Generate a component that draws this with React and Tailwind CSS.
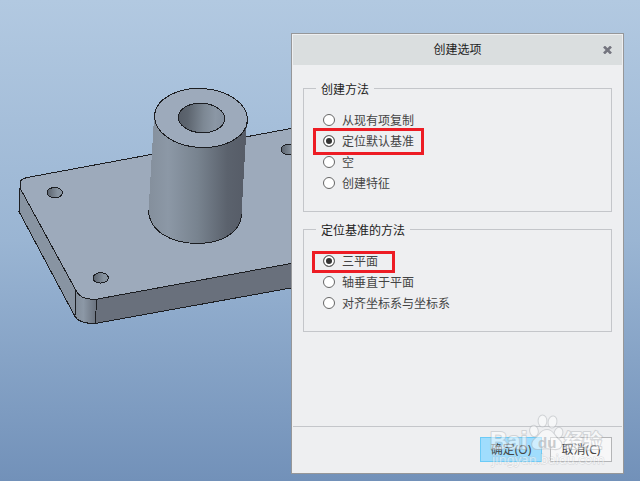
import React, { useState } from 'react';

const createMethods = [
  { value: 'copy', label: '从现有项复制' },
  { value: 'default', label: '定位默认基准', mark: '-inset-x-[10px] -top-[2px] -bottom-1' },
  { value: 'empty', label: '空' },
  { value: 'feature', label: '创建特征' },
];

const datumMethods = [
  { value: 'planes', label: '三平面', mark: '-left-[11px] -right-[17px] top-px -bottom-[2px]' },
  { value: 'axis', label: '轴垂直于平面' },
  { value: 'csys', label: '对齐坐标系与坐标系' },
];

const Hole = ({ cx, cy }) => (
  <ellipse cx={cx} cy={cy} rx="7.7" ry="5.2" fill="url(#hole)" stroke="#1c1e22" />
);

const ModelView = () => (
  <svg
    className="absolute inset-0 h-full w-full"
    viewBox="1 1 640 481"
    preserveAspectRatio="xMinYMin slice"
    shapeRendering="crispEdges"
    aria-hidden="true"
  >
    <defs>
      <linearGradient id="body">
        <stop offset="0" stopColor="#848f9c" />
        <stop offset="0.2" stopColor="#8c98a6" />
        <stop offset="0.5" stopColor="#78838f" />
        <stop offset="0.8" stopColor="#5b626d" />
        <stop offset="1" stopColor="#565c67" />
      </linearGradient>
      <linearGradient id="bore">
        <stop offset="0" stopColor="#565d67" />
        <stop offset="0.2" stopColor="#5d656f" />
        <stop offset="0.55" stopColor="#7d8894" />
        <stop offset="0.8" stopColor="#8b97a5" />
        <stop offset="1" stopColor="#838f9e" />
      </linearGradient>
      <linearGradient id="hole">
        <stop offset="0" stopColor="#59616b" />
        <stop offset="0.7" stopColor="#8793a0" />
        <stop offset="1" stopColor="#8793a0" />
      </linearGradient>
      <linearGradient id="corner">
        <stop offset="0" stopColor="#828d9a" />
        <stop offset="0.4" stopColor="#8c98a6" />
        <stop offset="1" stopColor="#6b737f" />
      </linearGradient>
    </defs>

    {/* plate sides */}
    <path d="M21 188 L77 291 L76 317 L20 212 Z" fill="#8894a2" />
    <path d="M77 290 Q83 300 97 300 L96 324 Q80 325 76 317 Z" fill="url(#corner)" />
    <path d="M97 300 L300 263 L300 287 L96 324 Z" fill="#69707c" />
    {/* top face */}
    <path
      d="M21 189 V183 Q23 179 31 178 L300 128 V263 L97 300.300 Q81 301 77 291.500 Z"
      fill="#9daabb"
      stroke="#1c1e22"
    />
    <path
      d="M21 189 L20 212.500 L76 317.500 Q80 324.500 96 324.500 L300 287.500 M77 291.500 L76 317 M97.500 300 L96.500 324"
      fill="none"
      stroke="#1c1e22"
    />
    <Hole cx="55.700" cy="193.700" />
    <Hole cx="101.700" cy="278.900" />
    <Hole cx="289.700" cy="150.600" />

    {/* boss */}
    <path d="M155 118 L149.500 212 C150 231 170 244.500 199.500 244.500 C226 244 242.500 231 242.500 215 L248 120 Z" fill="url(#body)" />
    <path d="M149.500 211 C150 231 170 244.500 199.500 244.500 C226 244 242.500 231 242.500 215" fill="none" stroke="#1c1e22" />
    <ellipse cx="202" cy="119" rx="46.500" ry="29.500" transform="rotate(3 202 119)" fill="#9daabb" stroke="#1c1e22" />
    <ellipse cx="202.500" cy="119" rx="23.200" ry="14.700" transform="rotate(3 202.500 119)" fill="url(#bore)" stroke="#1c1e22" />
  </svg>
);

const Watermark = () => (
  <svg
    className="pointer-events-none absolute right-[17px] bottom-1 h-[58px] w-[118px]"
    viewBox="0 0 118 58"
    aria-hidden="true"
  >
    <g fill="#ffffff" stroke="#b4b8bc" strokeWidth="2" paintOrder="stroke" strokeLinejoin="round" opacity="0.5">
      <ellipse cx="46" cy="20" rx="3.800" ry="5.200" transform="rotate(-12 46 20)" />
      <ellipse cx="54.500" cy="10" rx="3.900" ry="5.600" />
      <ellipse cx="64.500" cy="11" rx="3.900" ry="5.600" transform="rotate(12 64.500 11)" />
      <ellipse cx="70.500" cy="22" rx="3.800" ry="5.200" transform="rotate(15 70.500 22)" />
      <path d="M59 19 C53 19 52 24 47 28 C42 32 44 39 51 38 C56 37 61 37 66 38 C73 39 76 33 71 29 C66 25 65 19 59 19 Z" />
      <text x="2" y="38" fontSize="24" className="font-['Liberation_Sans',sans-serif] font-bold">Bai</text>
      <text x="76" y="37" fontSize="19" className="font-['Noto_Sans_CJK_SC',sans-serif] font-bold">经验</text>
    </g>
    <text x="50" y="37" fontSize="15" fill="#b4b8bc" opacity="0.7" className="font-['Liberation_Sans',sans-serif] font-bold">du</text>
    <text
      x="4"
      y="53"
      fontSize="13"
      fill="#ffffff"
      stroke="#b4b8bc"
      strokeWidth="1"
      paintOrder="stroke"
      opacity="0.45"
      className="font-['Noto_Sans',sans-serif]"
    >
      jingyan.baidu.com
    </text>
  </svg>
);

const RadioGroup = ({ title, name, options, value, onChange, className }) => (
  <fieldset className={`border border-[#c4c6ca] pl-[19px] ${className}`}>
    <legend className="-ml-[7px] px-[5px] pt-1 leading-4 text-[#222]">{title}</legend>
    {options.map((option) => (
      <label key={option.value} className="relative flex h-[21px] w-fit items-center gap-[7px]">
        <input
          type="radio"
          name={name}
          value={option.value}
          checked={value === option.value}
          onChange={() => onChange(option.value)}
          className="h-3 w-3 appearance-none rounded-full border border-[#666] bg-white checked:bg-[#333] checked:shadow-[inset_0_0_0_2px_white]"
        />
        <span className="pt-[2px]">{option.label}</span>
        {option.mark && <span className={`pointer-events-none absolute border-3 border-[#ed1c24] ${option.mark}`} />}
      </label>
    ))}
  </fieldset>
);

const App = () => {
  const [method, setMethod] = useState('default');
  const [datum, setDatum] = useState('planes');

  return (
    <main className="relative flex min-h-screen items-start justify-end overflow-hidden bg-linear-to-b from-[#b2c9e1] via-[#9ab5d3] to-[#7291b9] pt-[33px] pr-4 pb-[7px] font-['Noto_Sans','Noto_Sans_CJK_SC',sans-serif] text-xs text-[#444]">
      <ModelView />
      <form
        role="dialog"
        aria-labelledby="dialog-title"
        onSubmit={(e) => e.preventDefault()}
        className="relative w-[333px] max-w-full border border-[#969799] bg-[#eeeff1]"
      >
        <header className="mx-px mt-px grid h-[30px] grid-cols-[1fr_auto_1fr] items-center bg-[#dadedf] px-[10px]">
          <h1 id="dialog-title" className="col-start-2 text-[#222]">创建选项</h1>
          <button type="button" aria-label="关闭" className="justify-self-end">
            <svg width="9" height="8" viewBox="0 0 9 8" fill="none" stroke="#74757f" strokeWidth="2.600">
              <path d="M1 0.500 L8 7.500 M8 0.500 L1 7.500" />
            </svg>
          </button>
        </header>

        <div className="flex flex-col px-[11px] pt-[13px]">
          <RadioGroup
            title="创建方法"
            name="create-method"
            options={createMethods}
            value={method}
            onChange={setMethod}
            className="pt-[11px] pb-[18px]"
          />
          <RadioGroup
            title="定位基准的方法"
            name="datum-method"
            options={datumMethods}
            value={datum}
            onChange={setDatum}
            className="mt-[7px] pt-[11px] pb-[18px]"
          />
        </div>

        <footer className="mx-px mt-[94px] flex justify-end gap-2 border-t border-[#c4c6ca] px-[10px] pt-[10px] pb-[11px]">
          <button type="submit" className="h-[25px] w-[62px] border border-[#6ccbf7] bg-[#a0ddfd]">确定(O)</button>
          <button type="button" className="h-[25px] w-[62px] border border-[#b4b5b7] bg-[#f7f7f8]">取消(C)</button>
        </footer>
        <Watermark />
      </form>
    </main>
  );
};

export default App;
